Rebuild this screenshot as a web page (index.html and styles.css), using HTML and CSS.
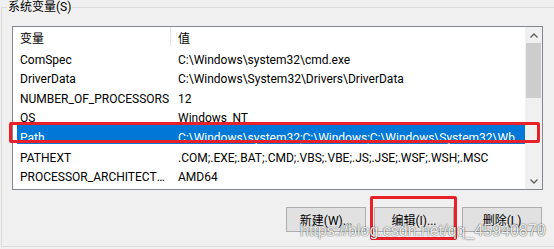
FILE: index.html
```html
<!DOCTYPE html>
<html lang="zh-CN">
<head>
<meta charset="utf-8">
<title>系统变量</title>
<link rel="stylesheet" href="styles.css">
</head>
<body>
<fieldset class="group">
  <legend class="group-title">系统变量(S)</legend>
  <div class="listbox">
    <div class="list-main">
      <div class="list-head">
        <div class="head-cell head-name">变量</div>
        <div class="head-cell head-value">值</div>
      </div>
      <div class="row"><span class="cell name">ComSpec</span><span class="cell value">C:\Windows\system32\cmd.exe</span></div>
      <div class="row"><span class="cell name">DriverData</span><span class="cell value">C:\Windows\System32\Drivers\DriverData</span></div>
      <div class="row"><span class="cell name">NUMBER_OF_PROCESSORS</span><span class="cell value">12</span></div>
      <div class="row"><span class="cell name">OS</span><span class="cell value">Windows_NT</span></div>
      <div class="row selected"><span class="cell name">Path</span><span class="cell value">C:\Windows\system32;C:\Windows;C:\Windows\System32\Wbem;C:\Windows\System32\WindowsPowerShell\v1.0\</span></div>
      <div class="row"><span class="cell name">PATHEXT</span><span class="cell value">.COM;.EXE;.BAT;.CMD;.VBS;.VBE;.JS;.JSE;.WSF;.WSH;.MSC</span></div>
      <div class="row"><span class="cell name">PROCESSOR_ARCHITECTURE</span><span class="cell value">AMD64</span></div>
    </div>
    <div class="scrollbar">
      <div class="scroll-btn">
        <svg width="8" height="5" viewBox="0 0 8 5"><path d="M0.5 4.5 L4 1 L7.5 4.5" fill="none" stroke="#606060" stroke-width="1.4"/></svg>
      </div>
      <div class="scroll-track"><div class="scroll-thumb"></div></div>
      <div class="scroll-btn">
        <svg width="8" height="5" viewBox="0 0 8 5"><path d="M0.5 0.5 L4 4 L7.5 0.5" fill="none" stroke="#606060" stroke-width="1.4"/></svg>
      </div>
    </div>
  </div>
  <div class="buttons">
    <button class="btn">新建(W)...</button>
    <button class="btn">编辑(I)...</button>
    <button class="btn">删除(L)</button>
  </div>
</fieldset>
<div class="mark mark-row"></div>
<div class="mark mark-btn"></div>
<div class="watermark">https://blog.csdn.net/qq_45940870</div>
</body>
</html>
```
FILE: styles.css
```css
html, body {
  margin: 0;
  padding: 0;
  width: 554px;
  height: 249px;
  overflow: hidden;
  background: #f0f0f0;
}
body {
  position: relative;
  font-family: Roboto, "Noto Sans CJK SC", sans-serif;
  font-size: 12px;
  color: #000;
}
.group {
  margin: 0 0 0 1px;
  width: 600px;
  min-width: 0;
  box-sizing: border-box;
  border: 1px solid #dcdcdc;
  padding: 0 0 14px 10px;
}
.group-title {
  margin-left: -5px;
  padding: 0 1px;
  line-height: 15px;
  font-size: 12px;
  color: #000;
}
.listbox {
  margin-top: 11px;
  width: 531px;
  height: 164px;
  box-sizing: border-box;
  border: 1px solid #828790;
  background: #fff;
  display: flex;
}
.list-main {
  flex: 1;
  min-width: 0;
  display: flex;
  flex-direction: column;
}
.list-head {
  display: flex;
  height: 18.5px;
  flex: none;
}
.head-cell {
  display: flex;
  align-items: center;
  box-sizing: border-box;
  padding-top: 2px;
}
.head-name {
  width: 158px;
  padding-left: 7px;
  border-right: 1px solid #e5e5e5;
}
.head-value {
  padding-left: 7px;
}
.row {
  display: flex;
  align-items: flex-start;
  box-sizing: border-box;
  height: 19.67px;
  flex: none;
  padding-top: 8px;
  margin-left: 4px;
  white-space: nowrap;
  line-height: 13px;
}
.cell {
  box-sizing: border-box;
  padding-left: 3px;
  overflow: hidden;
  text-overflow: ellipsis;
  white-space: nowrap;
}
.name {
  width: 158px;
  flex: none;
  padding-right: 4px;
}
.value {
  flex: 1;
  min-width: 0;
  padding-right: 2px;
}
.row.selected {
  background: #0078d7;
  color: #fff;
}
.scrollbar {
  width: 17px;
  flex: none;
  background: #f0f0f0;
  display: flex;
  flex-direction: column;
}
.scroll-btn {
  height: 16px;
  display: flex;
  align-items: center;
  justify-content: center;
}
.scroll-btn svg {
  display: block;
}
.scroll-track {
  flex: 1;
  padding: 0 1px;
}
.scroll-thumb {
  height: 55px;
  background: #cdcdcd;
}
.buttons {
  width: 530px;
  margin-top: 17px;
  display: flex;
  justify-content: flex-end;
  gap: 8px;
}
.btn {
  width: 80px;
  height: 25px;
  margin: 0;
  padding: 0;
  border: 1px solid #adadad;
  background: #e1e1e1;
  font-family: Roboto, "Noto Sans CJK SC", sans-serif;
  font-size: 12px;
  color: #000;
}
.mark {
  position: absolute;
  box-sizing: border-box;
  border: 3px solid #e8202a;
  border-radius: 2px;
}
.mark-row {
  left: 9px;
  top: 122px;
  width: 531px;
  height: 21px;
}
.mark-btn {
  left: 370px;
  top: 196px;
  width: 87px;
  height: 44px;
}
.watermark {
  position: absolute;
  left: 300px;
  top: 222px;
  font-family: "Liberation Sans", Arial, sans-serif;
  font-size: 16px;
  line-height: 18px;
  color: rgba(255, 255, 255, 0.9);
  text-shadow: 0 0 1px rgba(0, 0, 0, 0.65), 0 0 2px rgba(0, 0, 0, 0.3);
  white-space: nowrap;
}
```
